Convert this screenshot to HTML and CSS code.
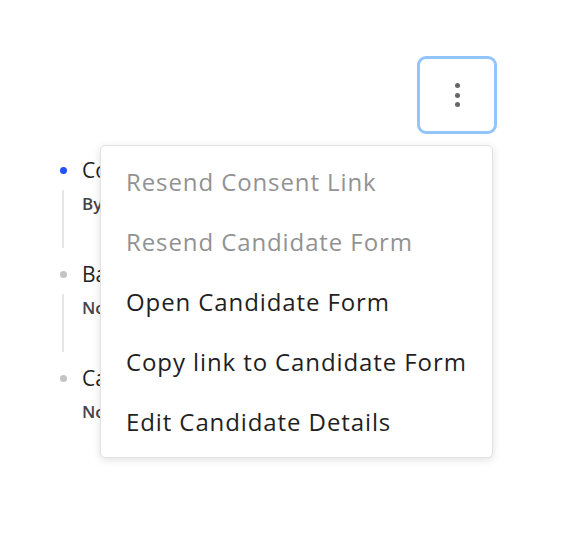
FILE: index.html
```html
<!DOCTYPE html>
<html lang="en">
<head>
    <meta charset="UTF-8">
    <meta name="viewport" content="width=device-width, initial-scale=1.0">
    <title>Candidate Actions</title>
    <link rel="stylesheet" href="styles.css">
</head>
<body>
    <div class="page">
        <div class="toolbar">
            <button class="kebab-btn" aria-label="More actions">
                <span class="kebab-dot"></span>
                <span class="kebab-dot"></span>
                <span class="kebab-dot"></span>
            </button>
        </div>

        <ul class="timeline">
            <li class="step">
                <div class="step-marker">
                    <span class="dot dot-active"></span>
                    <span class="rail"></span>
                </div>
                <div class="step-body">
                    <div class="step-title">Consent</div>
                    <div class="step-sub">By HR</div>
                </div>
            </li>
            <li class="step">
                <div class="step-marker">
                    <span class="dot"></span>
                    <span class="rail"></span>
                </div>
                <div class="step-body">
                    <div class="step-title">Background</div>
                    <div class="step-sub">None</div>
                </div>
            </li>
            <li class="step">
                <div class="step-marker">
                    <span class="dot"></span>
                </div>
                <div class="step-body">
                    <div class="step-title">Candidate</div>
                    <div class="step-sub">None</div>
                </div>
            </li>
        </ul>

        <ul class="dropdown" role="menu">
            <li class="dropdown-item disabled">Resend Consent Link</li>
            <li class="dropdown-item disabled">Resend Candidate Form</li>
            <li class="dropdown-item">Open Candidate Form</li>
            <li class="dropdown-item">Copy link to Candidate Form</li>
            <li class="dropdown-item">Edit Candidate Details</li>
        </ul>
    </div>
</body>
</html>
```

FILE: styles.css
```css
body {
    margin: 0;
    background-color: #ffffff;
    font-family: 'Open Sans', 'Liberation Sans', sans-serif;
    color: #222;
}

.page {
    position: relative;
    width: 566px;
    height: 542px;
}

.toolbar {
    display: flex;
    justify-content: flex-end;
    padding: 56px 69px 0 0;
}

.kebab-btn {
    width: 80px;
    height: 78px;
    border: 3px solid #93c5fd;
    border-radius: 9px;
    background-color: #ffffff;
    display: flex;
    flex-direction: column;
    align-items: center;
    justify-content: center;
    gap: 4.5px;
    padding: 0;
    cursor: pointer;
}

.kebab-dot {
    width: 5px;
    height: 5px;
    border-radius: 50%;
    background-color: #666;
}

.timeline {
    list-style: none;
    margin: 22px 0 0 0;
    padding: 0 0 0 58px;
}

.step {
    display: flex;
    gap: 14px;
    height: 104px;
}

.step-marker {
    width: 10px;
    display: flex;
    flex-direction: column;
    align-items: center;
}

.dot {
    width: 7px;
    height: 7px;
    border-radius: 50%;
    background-color: #c4c4c4;
    margin-top: 11px;
}

.dot-active {
    background-color: #2451f5;
}

.rail {
    width: 2px;
    height: 58px;
    margin-top: 16px;
    background-color: #e6e6e6;
}

.step-title {
    font-size: 21px;
    line-height: 28px;
    color: #222;
}

.step-sub {
    font-size: 17px;
    line-height: 24px;
    font-weight: 600;
    color: #444;
    margin-top: 8px;
}

.dropdown {
    position: absolute;
    top: 145px;
    left: 100px;
    width: 393px;
    box-sizing: border-box;
    margin: 0;
    padding: 5px 0 6px;
    list-style: none;
    background-color: #ffffff;
    border: 1px solid #e2e2e2;
    border-radius: 5px;
    box-shadow: 0 2px 8px rgba(0, 0, 0, 0.12);
}

.dropdown-item {
    height: 60px;
    display: flex;
    align-items: center;
    padding-left: 25px;
    font-size: 24px;
    letter-spacing: 0.9px;
    color: #1f1f24;
    cursor: pointer;
}

.dropdown-item.disabled {
    color: #929292;
    cursor: default;
}
```
